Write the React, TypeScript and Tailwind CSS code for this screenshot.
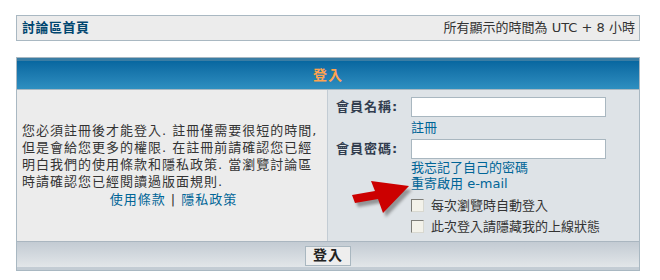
import React from "react";

const font = { fontFamily: '"DejaVu Sans", "Noto Sans CJK TC", sans-serif' };

function Check({ label }: { label: string }) {
  return (
    <div className="flex items-center h-[21px]">
      <span className="w-[13px] h-[13px] border border-t-[#7d7d78] border-l-[#7d7d78] border-b-[#d8d8d0] border-r-[#d8d8d0] bg-[#f3f2ea] shrink-0" />
      <span className="ml-[7px] text-[13px] text-[#333333] leading-[15px]">{label}</span>
    </div>
  );
}

export default function App() {
  return (
    <div className="w-[660px] h-[280px] bg-white relative pt-[15px] pl-[16px]" style={font}>
      {/* top bar */}
      <div className="w-[624px] h-[26px] border border-[#a9b8c2] bg-[#ececec] flex items-center justify-between pl-[5px] pr-[4px]">
        <span className="text-[13px] font-bold text-[#00466f] tracking-[0.5px]">討論區首頁</span>
        <span className="text-[13px] text-[#333333]">所有顯示的時間為 UTC + 8 小時</span>
      </div>

      {/* login panel */}
      <div className="mt-[16px] w-[624px] border border-[#a9b8c2]">
        <div className="h-[31px] border-t-[3px] border-[#3a7da4] bg-gradient-to-b from-[#0767a0] to-[#2e8fc0] flex items-center justify-center">
          <span className="text-[14px] font-bold text-[#ffa34f] tracking-[1px]">登入</span>
        </div>
        <div className="flex h-[152px] border-t border-[#a9b8c2]">
          <div className="w-[311px] bg-[#ececec] border-r border-[#c3ccd4] flex flex-col justify-center pl-[5px] pr-[2px]">
            <p className="text-[13px] tracking-[1px] leading-[17px] text-[#333333] whitespace-nowrap">
              您必須註冊後才能登入. 註冊僅需要很短的時間,
              <br />
              但是會給您更多的權限. 在註冊前請確認您已經
              <br />
              明白我們的使用條款和隱私政策. 當瀏覽討論區
              <br />
              時請確認您已經閱讀過版面規則.
            </p>
            <p className="text-[13px] tracking-[1px] leading-[18px] text-center text-[#006597] mt-[1px]">
              使用條款 <span className="text-[#333333]">|</span> 隱私政策
            </p>
          </div>
          <div className="flex-1 bg-[#dee3e7] pt-[7px] pl-[8px]">
            <div className="grid grid-cols-[75px_1fr]">
              <div className="h-[20px] flex items-center text-[13px] font-bold text-[#323d4f] tracking-[1px]">會員名稱:</div>
              <div className="w-[195px] h-[20px] border border-[#a9b7c0] bg-white" />
              <div />
              <div className="text-[13px] text-[#006597] leading-[17px] pt-[2px] h-[22px]">註冊</div>
              <div className="h-[20px] flex items-center text-[13px] font-bold text-[#323d4f] tracking-[1px]">會員密碼:</div>
              <div className="w-[195px] h-[20px] border border-[#a9b7c0] bg-white" />
              <div />
              <div className="text-[13px] text-[#006597] leading-[15.5px] pt-[1px]">
                <div>我忘記了自己的密碼</div>
                <div>重寄啟用 e-mail</div>
                <div className="mt-[4px]">
                  <Check label="每次瀏覽時自動登入" />
                  <Check label="此次登入請隱藏我的上線狀態" />
                </div>
              </div>
            </div>
          </div>
        </div>
        <div className="border-t border-[#aab6c0]">
          <div className="h-[25px] bg-gradient-to-b from-[#c3cbd3] to-[#e2e6e9] flex items-center justify-center">
            <button className="w-[46px] h-[20px] border border-[#a9b7c0] bg-[#eeeeee] text-[14px] text-[#222222] font-bold tracking-[1px] flex items-center justify-center mt-[2px]">
              登入
            </button>
          </div>
          <div className="h-[3px] bg-[#c3ccd4]" />
        </div>
      </div>

      {/* red arrow */}
      <svg className="absolute left-[344px] top-[174px]" width="75" height="50" viewBox="344 174 75 50">
        <defs>
          <filter id="sh" x="-30%" y="-30%" width="160%" height="160%">
            <feGaussianBlur stdDeviation="1.6" />
          </filter>
        </defs>
        <polygon
          points="355,199 378,195 374,185 412,190 386,217 381,203 358,207"
          fill="#555555"
          opacity="0.55"
          filter="url(#sh)"
        />
        <polygon points="352,195 375,191 371,181 409,186 383,213 378,199 355,203" fill="#cc0000" />
      </svg>
    </div>
  );
}
